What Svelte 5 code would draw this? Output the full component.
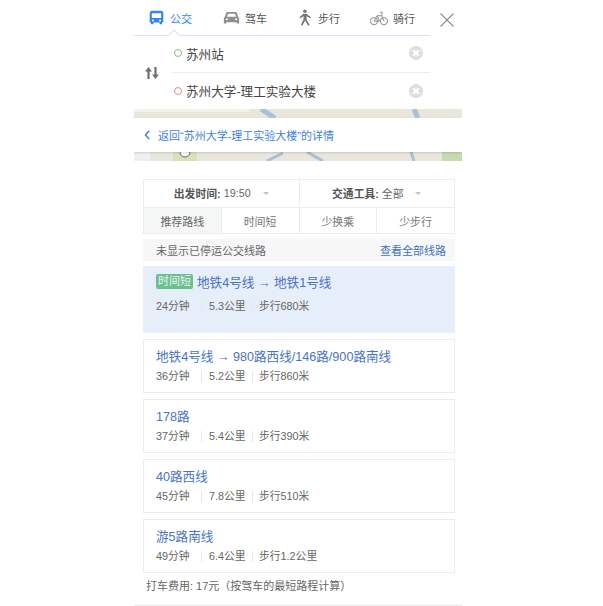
<script>
  const tabs = [
    { id: 'bus', label: '公交', active: true },
    { id: 'car', label: '驾车' },
    { id: 'foot', label: '步行' },
    { id: 'bike', label: '骑行' }
  ]
  const sorts = ['推荐路线', '时间短', '少换乘', '少步行']
  const routes = [
    { name: '地铁4号线 → 地铁1号线', tag: '时间短', time: '24分钟', dist: '5.3公里', walk: '步行680米', first: true },
    { name: '地铁4号线 → 980路西线/146路/900路南线', time: '36分钟', dist: '5.2公里', walk: '步行860米' },
    { name: '178路', time: '37分钟', dist: '5.4公里', walk: '步行390米' },
    { name: '40路西线', time: '45分钟', dist: '7.8公里', walk: '步行510米' },
    { name: '游5路南线', time: '49分钟', dist: '6.4公里', walk: '步行1.2公里' }
  ]
</script>

<div class="panel">
  <div class="head">
    <nav class="tabs">
      {#each tabs as tab}
        <div class="tab {tab.id}" class:active={tab.active}>
          <svg viewBox="0 0 20 20" width="20" height="20">
            {#if tab.id === 'bus'}
              <path fill="#3385ff" fill-rule="evenodd" d="M5 2h10a3 3 0 0 1 3 3v11h-1.500v2h-3v-2h-7v2h-3v-2H2V5a3 3 0 0 1 3-3zM4.500 5v5.500h11V5zM5.800 12.300a1.200 1.200 0 1 0 0 2.400 1.200 1.200 0 0 0 0-2.400zM14.200 12.300a1.200 1.200 0 1 0 0 2.400 1.200 1.200 0 0 0 0-2.400z" />
            {:else if tab.id === 'car'}
              <path fill="#8f8f8f" fill-rule="evenodd" d="M5.500 3.500h9c1 0 1.600.6 2 1.500l1.200 4c.8.500 1.300 1.200 1.300 2.200V17h-3v-1.500H4V17H1v-5.800c0-1 .5-1.700 1.300-2.200l1.200-4c.4-.9 1-1.500 2-1.500zM5.800 5.500L4.700 9h10.600l-1.100-3.500zM4.500 10.800a1.200 1.200 0 1 0 0 2.400 1.200 1.200 0 0 0 0-2.400zM15.500 10.800a1.200 1.200 0 1 0 0 2.400 1.200 1.200 0 0 0 0-2.400z" />
            {:else if tab.id === 'foot'}
              <circle cx="10.500" cy="2.600" r="2.100" fill="#777" />
              <path fill="#777" d="M8.600 5.500h3.600l5.300 4.200-1 1.300-4-2.500v3.800l3.500 6.500-1.700.8-3.600-6-3.300 6-1.700-.8 3.300-7V8.500L5 11 4 9.700z" />
            {:else}
              <g fill="none" stroke="#8a8a8a" stroke-width="1.100">
                <circle cx="4.500" cy="13.500" r="4" />
                <circle cx="15.500" cy="13.500" r="4" />
                <path d="M4.500 13.500L8 7.500h5l2.500 6M8 7.500l2.500 6h-6M11 3.500h2.500L13 7.500" />
              </g>
            {/if}
          </svg>
          <span>{tab.label}</span>
        </div>
      {/each}
      <i class="caret"></i>
    </nav>
    <svg class="close" viewBox="0 0 14 14" width="14" height="14">
      <path d="M.5.500l13 13M13.500.500l-13 13" stroke="#8d8d8d" stroke-width="1.100" fill="none" />
    </svg>
  </div>

  <div class="inputs">
    <svg class="swap" viewBox="0 0 16 12" width="16" height="12">
      <path fill="#6f6f6f" d="M4.500 0L8 4.500H5.600V12H3.400V4.500H1zM11.500 12L8 7.500h2.400V0h2.200v7.500H15z" />
    </svg>
    <div class="fields">
      <div class="field">
        <i class="dot start"></i><span>苏州站</span>
        <i class="clear"></i>
      </div>
      <div class="field">
        <i class="dot end"></i><span>苏州大学-理工实验大楼</span>
        <i class="clear"></i>
      </div>
    </div>
  </div>

  <div class="map top">
    <svg viewBox="0 0 328 9" width="328" height="9">
      <rect x="0" y="0" width="115" height="3" fill="#f2f1ea" />
      <path d="M127 0l14 9M280 0l4 9" stroke="#a9c0d6" stroke-width="5" fill="none" />
    </svg>
  </div>
  <div class="back">
    <svg viewBox="0 0 6 10" width="6" height="10">
      <path d="M5 1L1.500 5 5 9" stroke="#3f7fe0" stroke-width="1.500" fill="none" />
    </svg>
    <span>返回“苏州大学-理工实验大楼”的详情</span>
  </div>
  <div class="map bottom">
    <svg viewBox="0 0 328 9" width="328" height="9">
      <rect x="0" y="0" width="16" height="9" fill="#f0f0f0" />
      <rect x="39" y="0" width="24" height="9" fill="#d7e0b8" />
      <rect x="308" y="0" width="20" height="9" fill="#c5dbb0" />
      <path d="M133 9l16-8M173 0l16 9M277 0l3 9" stroke="#a9c0d6" stroke-width="3" fill="none" />
      <circle cx="51" cy="0" r="5" fill="#fff" stroke="#666" />
    </svg>
  </div>

  <div class="content">
    <div class="filters">
      <div class="row">
        <div class="drop"><b>出发时间:</b> 19:50<i class="arrow"></i></div>
        <div class="drop"><b>交通工具:</b> 全部<i class="arrow"></i></div>
      </div>
      <div class="row sorts">
        {#each sorts as sort, i}
          <div class="sort" class:on={i === 0}>{sort}</div>
        {/each}
      </div>
    </div>

    <div class="notice">
      <span>未显示已停运公交线路</span>
      <a href="#all">查看全部线路</a>
    </div>

    {#each routes as route}
      <div class="route" class:first={route.first}>
        <div class="name">
          {#if route.tag}<em>{route.tag}</em>{/if}{route.name}
        </div>
        <div class="meta">
          <span class="time">{route.time}</span>
          <i class="sep"></i>
          <span class="dist">{route.dist}</span>
          <i class="sep"></i>
          <span class="on-foot">{route.walk}</span>
        </div>
      </div>
    {/each}

    <p class="taxi">打车费用: 17元（按驾车的最短路程计算）</p>
  </div>
</div>

<style>
  :global(body) {
    margin: 0;
    background: #fff;
  }

  .panel {
    width: 328px;
    height: 606px;
    margin-left: 134px;
    box-sizing: border-box;
    border-bottom: 1px solid #e8e8e8;
    font-family: "Liberation Sans", "Noto Sans CJK SC", sans-serif;
    font-size: 12px;
    color: #555;
    overflow: hidden;
  }

  .head {
    display: flex;
    align-items: center;
    height: 36px;
  }

  .tabs {
    position: relative;
    display: flex;
    width: 296px;
    height: 36px;
    box-sizing: border-box;
    border-bottom: 1px solid #d5e0f2;
  }

  .tab {
    display: flex;
    align-items: center;
    gap: 5px;
    width: 74px;
    padding-left: 14px;
    box-sizing: border-box;
    font-size: 11px;
    color: #555;
  }

  .tab.active {
    color: #3385ff;
  }

  .tab svg {
    flex: none;
    width: 17px;
    height: 17px;
  }

  .tab.car {
    padding-left: 15px;
  }

  .tab.bike {
    padding-left: 14px;
    gap: 5px;
  }

  .tab.bike svg {
    width: 18px;
    height: 18px;
  }

  .caret {
    position: absolute;
    left: 36px;
    bottom: -1px;
    width: 7px;
    height: 7px;
    background: #fff;
    border-left: 1px solid #d5e0f2;
    border-top: 1px solid #d5e0f2;
    transform: translateY(3px) rotate(45deg);
  }

  .close {
    margin-left: 10px;
    margin-bottom: -4px;
  }

  .inputs {
    display: flex;
    align-items: center;
    height: 73px;
    box-sizing: border-box;
  }

  .swap {
    flex: none;
    margin-left: 10px;
    margin-top: 1px;
  }

  .fields {
    width: 258px;
    margin-left: 12px;
  }

  .field {
    display: flex;
    align-items: center;
    height: 36px;
    box-sizing: border-box;
    font-size: 12.600px;
    color: #444;
  }

  .field:first-child {
    padding-bottom: 2px;
    border-bottom: 1px solid #ececec;
  }

  .dot {
    width: 8px;
    height: 8px;
    box-sizing: border-box;
    border-radius: 50%;
    margin: 0 4px 0 2px;
  }

  .dot.start {
    border: 1.500px solid #7cc576;
  }

  .dot.end {
    border: 1.500px solid #e88b8b;
  }

  .clear {
    position: relative;
    width: 14px;
    height: 14px;
    border-radius: 50%;
    background: #dedede;
    margin-left: auto;
    margin-right: 7px;
  }

  .clear::before,
  .clear::after {
    content: '';
    position: absolute;
    left: 3px;
    top: 6px;
    width: 8px;
    height: 2px;
    background: #fff;
    transform: rotate(45deg);
  }

  .clear::after {
    transform: rotate(-45deg);
  }

  .map {
    background: #e9e6dc;
    line-height: 0;
  }

  .map svg {
    display: block;
  }

  .map.top,
  .map.bottom {
    height: 9px;
  }

  .back {
    display: flex;
    align-items: center;
    gap: 8px;
    height: 34px;
    padding-left: 10px;
    background: #fff;
    box-shadow: 0 1px 2px rgba(0, 0, 0, 0.15);
    color: #3f7fe0;
    font-size: 11px;
    position: relative;
  }

  .content {
    padding: 18px 7px 0 9px;
  }

  .filters {
    border: 1px solid #ececec;
  }

  .row {
    display: flex;
    height: 27px;
    padding-bottom: 1px;
    box-sizing: border-box;
  }

  .row.sorts {
    height: 26px;
    padding-bottom: 0;
    border-top: 1px solid #ececec;
  }

  .drop {
    flex: 1;
    display: flex;
    align-items: center;
    justify-content: center;
    gap: 3px;
    font-size: 10.800px;
    color: #666;
  }

  .drop + .drop {
    border-left: 1px solid #ececec;
  }

  .drop b {
    color: #555;
  }

  .arrow {
    width: 0;
    height: 0;
    margin-left: 9px;
    border: 3.500px solid transparent;
    border-top: 3.500px solid #c4c4c4;
    border-bottom: 0;
  }

  .sort {
    flex: 1;
    display: flex;
    align-items: center;
    justify-content: center;
    font-size: 11px;
    color: #777;
  }

  .sort + .sort {
    border-left: 1px solid #ececec;
  }

  .sort.on {
    background: #f5f6f6;
    color: #666;
  }

  .notice {
    display: flex;
    justify-content: space-between;
    align-items: center;
    height: 22px;
    margin-top: 5px;
    padding: 0 9px 0 13px;
    background: #f7f7f7;
    font-size: 11px;
    color: #666;
  }

  .notice a {
    color: #3f6fc4;
    text-decoration: none;
  }

  .route {
    height: 54px;
    box-sizing: border-box;
    margin-top: 6px;
    padding: 6px 12px 0;
    border: 1px solid #ececec;
  }

  .route.first {
    height: 67px;
    margin-top: 5px;
    padding-top: 5px;
    background: #e6eef9;
    border-color: #e6eef9;
  }

  .name {
    display: flex;
    align-items: center;
    gap: 4px;
    height: 18px;
    font-size: 12.600px;
    color: #4a73c4;
  }

  .name em {
    padding: 0 2px;
    border-radius: 2px;
    background: #6cbf8f;
    color: #e8f6ee;
    font-style: normal;
    font-size: 11px;
    line-height: 15px;
  }

  .meta {
    display: flex;
    align-items: center;
    margin-top: 5px;
    font-size: 10.800px;
    line-height: 14px;
    color: #666;
  }

  .route.first .meta {
    margin-top: 9px;
  }

  .time {
    width: 45px;
  }

  .sep {
    width: 1px;
    height: 11px;
    background: #e8e8e8;
  }

  .dist {
    width: 43px;
    padding-left: 7px;
  }

  .on-foot {
    padding-left: 6px;
  }

  .taxi {
    margin: 6px 0 0 3px;
    font-size: 11px;
    line-height: 14px;
    color: #666;
  }
</style>
